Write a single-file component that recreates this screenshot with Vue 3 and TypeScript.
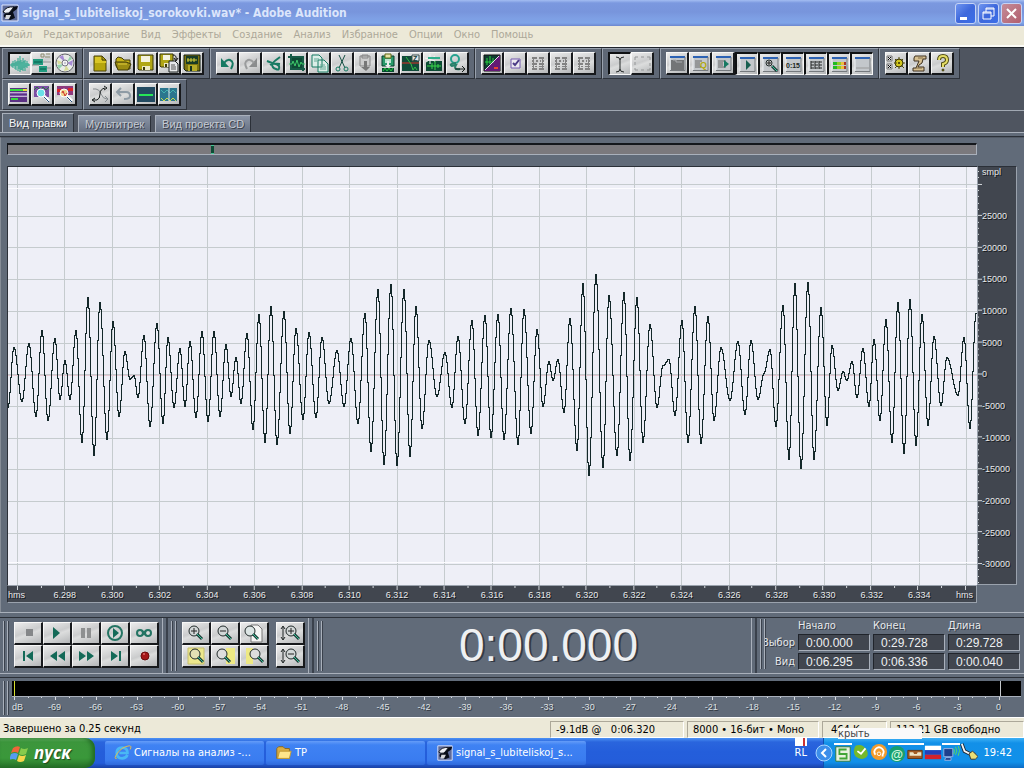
<script setup lang="ts">
import { h, type FunctionalComponent } from 'vue'

interface Shape {
  d?: string
  f?: string
  s?: string
  w?: number
  t?: string
  x?: number
  y?: number
  z?: number
}

const circle = (x: number, y: number, r: number): string =>
  `M${x - r} ${y}a${r} ${r} 0 1 0 ${2 * r} 0a${r} ${r} 0 1 0 ${-2 * r} 0z`

const teal = '#177a63'
const windowBase: Shape[] = [
  { d: 'M3 3h15v14H3z', f: '#c3c7cb' },
  { d: 'M3 17V5M3 4h15', s: '#eef1f4' },
  { d: 'M3 3h15v2H3z', f: '#2c62b4' },
  { d: 'M18 4v13.5H3', s: '#75797d' },
]
const presets: Shape[] = [
  { d: 'M4 4h5v2H4zM11 4h5v2h-5zM4 7h2v2H4zM8 7h2v2H8zM12 7h1v2h-1zM15 7h1v2h-1zM4 10h5v2H4zM11 10h5v2h-5zM4 13h2v1H4zM7 13h2v1H7zM11 13h5v1h-5zM4 15h5v2H4zM11 15h5v2h-5zM5 4h1v12H5zM14 4h1v12h-1z', f: '#828282' },
]
const lens = (x: number, y: number, fill = 'none', r = 4): Shape[] => [
  { d: circle(x, y, r), f: fill, s: '#222b2b', w: 1 },
  { d: `M${x + 3} ${y + 3}l5 5`, s: '#1c3c36', w: 3 },
  { d: `M${x + 3} ${y + 3}l5 5`, s: '#3cc39c', w: 1 },
]
const floppy = (x: number, y: number, n: number): Shape[] => [
  { d: `M${x} ${y}h${n}v${n}H${x + 1}L${x} ${y + n - 1}z`, f: '#b0a616', s: '#3b3808' },
  { d: `M${x + 3} ${y + 1}h${n - 6}v${Math.floor(n / 2) - 1}h${6 - n}z`, f: '#f4f2df' },
  { d: `M${x + 4} ${y + n - 4}h${n - 7}v4h${7 - n}z`, f: '#ece9c5' },
  { d: `M${x + 5} ${y + n - 3}h2v3h-2z`, f: '#3b3808' },
]
const adobe: Shape[] = [
  { d: 'M2 2h16v16H2z', f: '#5d6a98', s: '#dfe6ff' },
  { d: 'M4 14Q3 10 8 10L12 4 18 3 17 6 13 9 15 15 10 17z', f: '#090d18' },
  { d: 'M3 9Q6 3 14 4L9 10Q5 11 3 9z', f: '#eef0f5', s: '#090d18' },
  { d: 'M6 12h5l-2 4H5z', f: '#d7d8dc' },
]

const icons: Record<string, Shape[]> = {
  wave: [{ d: 'M1 10v2M2 9v4M3 7v7M4 9v3M5 6v9M6 8v8M7 7v5M8 4v13M9 7v8M10 2v16M11 6v10M12 8v8M13 4v13M14 7v7M15 6v11M16 9v4M17 7v7M18 9v3M19 10v2', s: '#20a589' }],
  multi: [
    { d: 'M1 6h10v6H1zM7 13h8v6H7z', f: '#229b80' },
    { d: 'M11 9h8M0 12h7M15 15h4', s: '#8b9292' },
    { d: 'M2 9h8M8 16h6', s: '#075b4b' },
    { d: 'M9 1h3v3H9zM14 1h4M13 4h5', s: '#8e8b70' },
  ],
  cd: [
    { d: circle(10, 10, 9), f: '#e9ece8', s: '#63656b' },
    { d: 'M10 9L4 4 8 2zM12 10l6-3-1 6z', f: '#a78bd5' },
    { d: 'M9 11L2 12l2 4zM12 9l3-6 2 3z', f: '#94d3ad' },
    { d: 'M9 10L2 7l1 4zM11 12l3 5-5 1z', f: '#d7dc96' },
    { d: circle(10, 10, 3), f: '#f4f3f5', s: '#777484' },
    { d: circle(10, 10, 1), f: '#b8b8c6' },
  ],
  newfile: [{ d: 'M4 3h8l4 4v11H4z', f: '#b5a50e', s: '#4a4308' }, { d: 'M5 4h7v4h4v2H5z', f: '#dac626' }, { d: 'M12 3v4h4', s: '#4a4308' }],
  open: [{ d: 'M3 6l2-2 4 1 2 2h6v9H5L3 13z', f: '#c6b318', s: '#403b08' }, { d: 'M2 9h11l5 2-3 6H5z', f: '#9b8c12', s: '#403b08' }, { d: 'M5 11h9', s: '#e2ce3a' }],
  save: floppy(2, 2, 15),
  saveas: [...floppy(1, 1, 13), { d: 'M10 8h6l3 3v8h-9z', f: '#e6e8ea', s: '#1d2222' }, { d: 'M12 12h4M12 14h5M12 16h5', s: '#555' }, { d: 'M14 2q4 0 3 5M15 5l2 3 2-3', s: '#111' }],
  saveall: [{ d: 'M2 2h16v16H4l-2-2z', f: '#7e7610', s: '#111c10' }, { d: 'M4 3h12v8H4z', f: '#183b26' }, { d: 'M5 7h10M6 5v4M9 5v4M12 5v4', s: '#d9d137' }, { d: 'M6 12h9v6H6z', f: '#b6ac27' }, { d: 'M8 13h2v5H8z', f: '#173521' }],
  undo: [{ d: 'M4 5v9h8z', f: teal }, { d: 'M7 10Q10 6 13 7q5 2 1 9', s: teal, w: 2 }],
  redo: [{ d: 'M17 5v9H9z', f: '#8b8d8e' }, { d: 'M14 10Q11 6 8 7q-5 2-1 9', s: '#9a9c9d', w: 2 }],
  scrap: [{ d: 'M17 4Q11 8 8 12M4 8l5 2 8 1M7 12q5-3 9 1 1 5-3 3-4-1-4-5', s: teal, w: 2 }],
  crop: [{ d: 'M2 4h15v14M5 1v15h14', s: '#175b47', w: 2 }, { d: 'M6 5h10v10H6z', f: '#0e4b35' }, { d: 'M3 11h3l1-3 2 5 2-6 2 7 2-5 1 2h3', s: '#3dc76a' }],
  copy: [{ d: 'M3 2h7l3 3v9H3zM9 7h6l4 4v8H9z', f: '#dceee8', s: teal }, { d: 'M5 6h5M5 8h3M11 12h5M11 14h6M11 16h6', s: '#62aa96' }],
  cut: [{ d: 'M7 2l6 13M13 2L7 15', s: '#155044', w: 1 }, { d: circle(6, 16, 2), s: teal, w: 1 }, { d: circle(14, 16, 2), s: teal, w: 1 }],
  pasteoff: [{ d: 'M5 3h10v10H5zM7 2h6v3H7z', f: '#ccc', s: '#858585' }, { d: 'M9 8h3v6h3l-4 4-5-4h3z', f: '#777' }],
  paste: [{ d: 'M4 3h12v10H4z', f: '#2a9a6b', s: '#073d2d' }, { d: 'M7 1h6v4H7z', f: '#e5e4a6', s: '#656818' }, { d: 'M7 6h6v4H7z', f: '#bce3d0' }, { d: 'M9 8h2v4h2l-3 3-3-3h2z', f: '#eee' }, { d: 'M4 15h12v4H4z', f: '#064c30' }, { d: 'M5 18l2-3 2 3 2-3 2 3 2-3', s: '#26c03f' }],
  mixpaste: [{ d: 'M1 3h17v15H1z', f: '#104b3a' }, { d: 'M1 10h17', s: '#dd2e27' }, { d: 'M5 4l5 7 2 6 2-3 2 3', s: '#32ba45' }, { d: 'M11 2h7v6h-7z', f: '#e4e9e8', s: '#394c4c' }, { t: 'Z', x: 12, y: 8, z: 7, f: '#163d38' }],
  hush: [{ d: 'M2 8h16v10H2z', f: '#0e4b35' }, { d: 'M3 13h14M8 10v6M11 8v9M14 11v4', s: '#38d74b' }, { d: 'M6 1v10M1 5l10 3M2 9l9-6', s: '#f2f6f4' }, { d: 'M4 5h12', s: '#2fae8c', w: 2 }],
  convert: [{ d: circle(8, 6, 4), s: '#27a290', w: 2 }, { d: 'M9 10q-8 1-4 3l4-1q-3 5 4 4', s: '#27816b', w: 2 }, { d: 'M8 16h9M15 13l3 3-3 3', s: '#161d1a' }],
  spectral: [{ d: 'M2 2h16v16H2z', f: '#0e3b2f', s: '#111' }, { d: 'M18 2v16H2z', f: '#641a75' }, { d: 'M3 9h9M5 5v7M8 3v8M11 5v4', s: '#28d340' }, { d: 'M3 17L17 3', s: '#e8d9e9' }, { d: 'M12 15h4', s: '#e84233', w: 2 }],
  check: [{ d: 'M6 6h9v9H6z', f: '#eceaf0', s: '#755ab0' }, { d: 'M8 10l2 2 4-5', s: '#4a3a86', w: 2 }],
  p1: presets,
  p2: presets,
  p3: presets,
  ibeam: [{ d: 'M6 3q4 0 4 3 0-3 4-3M10 6v9q0 3-4 3M10 15q0 3 4 3', s: '#252929', w: 1 }],
  marquee: [{ d: 'M3 7V4h3M9 4h3M15 4h3v3M18 10v3M18 15v2h-3M12 17H9M6 17H3v-2M3 12V9', s: '#949697' }],
  winfiles: [...windowBase, { d: 'M4 7h13v10H4z', f: '#737577' }, { d: 'M6 7h3v2h6', s: '#aaacaf' }],
  winq: [...windowBase, { d: 'M5 8h7M5 10h5M5 12h5M5 14h6', s: '#666' }, { t: 'Q', x: 10, y: 15, z: 9, f: '#b2a90b' }],
  winp: [...windowBase, { d: 'M5 8h8M5 10h5M5 12h5M5 14h8', s: '#666' }, { d: 'M11 7l5 4-5 4z', f: teal }],
  winplay: [...windowBase, { d: 'M9 6l5 5-5 5z', f: '#165f50' }],
  winzoom: [...windowBase, ...lens(9, 9, '#c9cccc', 3), { d: 'M7 9h4M9 7v4', s: '#222' }],
  wintime: [...windowBase, { t: '0:15', x: 3, y: 14, z: 7, f: '#202622' }],
  wineee: [...windowBase, { d: 'M5 8h3M5 11h3M5 14h3M9 8h3M9 11h3M9 14h3M13 8h3M13 11h3M13 14h3M5 7v8M9 7v8M13 7v8', s: '#242727' }],
  winlevel: [...windowBase, { d: 'M4 8h4v3H4zM4 12h4v3H4z', f: '#21bb22' }, { d: 'M8 8h4v3H8zM8 12h4v3H8z', f: '#8fce25' }, { d: 'M12 8h3v3h-3zM12 12h3v3h-3z', f: '#efbe3d' }, { d: 'M15 8h2v3h-2zM15 12h2v3h-2z', f: '#a93627' }],
  winblank: [...windowBase, { d: 'M4 14h13', s: '#999' }],
  settings: [{ d: 'M1 3h5v5H1zM1 11h5v5H1z', f: '#dedfe0', s: '#777' }, { d: 'M2 4l3 3M5 4L2 7M2 12l3 3M5 12l-3 3', s: '#111' }, { d: circle(13, 10, 4), f: '#d1c61d', s: '#39370c' }, { d: 'M13 4v3M13 13v3M8 10h3M16 10h3M9 6l2 2M15 12l3 3M17 6l-2 2M9 15l2-2', s: '#514b0a', w: 1 }, { d: circle(13, 10, 1), f: '#302c06' }],
  script: [{ d: 'M6 3h11v3h-3q0 5-4 6l-1 2h6v4H4v-3h3l3-7H5V5z', f: '#d7c091', s: '#3e3120' }, { d: 'M9 5h5M7 15h6', s: '#816c46' }],
  help: [{ d: 'M7 7q0-4 4-4t4 4q0 3-4 4v3', s: '#504c12', w: 4 }, { d: 'M7 7q0-4 4-4t4 4q0 3-4 4v3', s: '#e4dc65', w: 2 }, { d: circle(11, 17, 1), f: '#817812', s: '#413d0c' }],
  bars: [{ d: 'M1 4h17v4H1zM1 9h17v3H1zM1 13h17v5H1z', f: '#5b3184' }, { d: 'M1 6h13M2 15h7', s: '#35dc3d', w: 2 }, { d: 'M14 6h4', s: '#e8da3a', w: 2 }, { d: 'M1 9h17M1 12h17', s: '#aa8bd0' }],
  freq: [{ d: 'M2 2h15v11H2z', f: '#7b4fa3' }, { d: 'M2 6l3-3 3 3 3-3 3 3 3-3', s: '#2b7640' }, { d: circle(9, 9, 4), f: '#69dfe7', s: '#fff' }, { d: 'M12 12l5 5', s: '#fff', w: 3 }, { d: 'M12 13l5 5', s: '#26507c', w: 1 }],
  phase: [{ d: 'M2 2h16v9H2z', f: '#8d397d' }, { d: 'M2 5h5v3H2zM13 4h5v3h-5z', f: '#da252a' }, { d: circle(9, 9, 4), f: '#f1d58f', s: '#fff' }, { d: 'M12 12l5 5', s: '#fff', w: 3 }, { d: 'M12 13l5 5', s: '#26507c', w: 1 }, { d: 'M7 9l1-2 2 5 2-3', s: '#ce302d' }],
  env: [{ d: 'M3 5h3q3 0 5 5t6 5M15 12l3 3-3 3', s: '#858b8f' }, { d: 'M3 16h4q3-1 3-6t5-6M5 14l-3 2 3 2M14 2l3 2-3 2', s: '#161b1b' }],
  back: [{ d: 'M8 4L4 8l4 4M5 8h8q4 0 4 4 0 3-6 3', s: '#8e9ba5', w: 2 }],
  line: [{ d: 'M1 3h18v15H1z', f: '#234a61' }, { d: 'M3 11h14', s: '#26e557', w: 2 }],
  waves: [{ d: 'M1 4h17v13H1z', f: '#2c768e' }, { d: 'M2 6l3 3 3-3 3 3 3-3 3 3', s: '#44b2b0' }, { d: 'M2 14l3 3 3-3 3 3 3-3 3 3', s: '#c4da48' }, { d: 'M10 4v13', s: '#e3e9ea' }],
  stop: [{ d: 'M11 6h7v7h-7z', f: '#858789' }],
  play: [{ d: 'M9 4l7 6-7 6z', f: '#146a58' }],
  pause: [{ d: 'M8 5h4v10H8zM14 5h4v10h-4z', f: '#8e9091' }],
  playview: [{ d: circle(13, 10, 7), s: '#247463', w: 2 }, { d: 'M11 5l6 5-6 5z', f: '#146a58' }],
  loop: [{ d: circle(9, 10, 3), s: '#247463', w: 2 }, { d: circle(17, 10, 3), s: '#247463', w: 2 }, { d: 'M11 8l4 4M11 12l4-4', s: '#247463', w: 2 }],
  begin: [{ d: 'M8 5h2v10H8zM18 5v10l-7-5z', f: '#146a58' }],
  rew: [{ d: 'M13 5v10l-7-5zM21 5v10l-7-5z', f: '#146a58' }],
  fwd: [{ d: 'M6 5v10l7-5zM14 5v10l7-5z', f: '#146a58' }],
  end: [{ d: 'M17 5h2v10h-2zM9 5v10l7-5z', f: '#146a58' }],
  record: [{ d: circle(14, 10, 4), f: '#a51719', s: '#6b0b0d' }, { d: circle(13, 8, 1), f: '#e26d6b' }],
  zin: [...lens(11, 8, '#d2d7d7', 5), { d: 'M8 8h6M11 5v6', s: '#222' }],
  zout: [...lens(11, 8, '#d2d7d7', 5), { d: 'M8 8h6', s: '#222' }],
  zpage: [{ d: 'M10 2h7l4 4v13H10z', f: '#f5f5f4', s: '#777' }, ...lens(9, 8, '#dce5e4', 5)],
  zsel: [{ d: 'M5 2h16v16H5z', f: '#ece78c', s: '#c7c06c' }, ...lens(12, 8, '#e3e0b4', 5)],
  zleft: [{ d: 'M14 2h9v16h-9z', f: '#eee984' }, ...lens(10, 8, '#ddd', 5)],
  zright: [{ d: 'M5 2h7v16H5z', f: '#eee984' }, ...lens(14, 8, '#ddd', 5)],
  vin: [{ d: 'M6 4v12M4 6l2-3 2 3M4 14l2 3 2-3', s: '#1e2424' }, ...lens(14, 8, '#d2d7d7', 5), { d: 'M11 8h6M14 5v6', s: '#222' }],
  vout: [{ d: 'M6 4v12M4 6l2-3 2 3M4 14l2 3 2-3', s: '#1e2424' }, ...lens(14, 8, '#d2d7d7', 5), { d: 'M11 8h6', s: '#222' }],
  adobe,
  ie: [{ d: 'M15 12q-2 4-6 4-6 0-6-6 0-6 6-6 6 0 6 6H6', s: '#49b8f5', w: 3 }, { d: 'M3 16Q-1 17 4 10T17 2q3 0 1 4', s: '#f2bf3e', w: 1 }],
  folder: [{ d: 'M2 5l2-2h5l2 2h5v11H2z', f: '#d9ad44', s: '#89661b' }, { d: 'M5 8h13l-2 8H3z', f: '#ffe58b', s: '#c19731' }],
  flag: [{ d: 'M3 5q4-3 7-1L8 10q-3-2-7 0z', f: '#ef6539' }, { d: 'M11 5q3 2 7 0l-2 6q-4 2-7 0z', f: '#87cb4c' }, { d: 'M1 11q4-2 7 0l-2 6q-3-2-7 0z', f: '#559cf1' }, { d: 'M9 12q3 2 7 0l-2 6q-4 2-7 0z', f: '#f6d64b' }],
  tscan: [{ d: 'M2 2h16v16H2z', f: '#e9f1df', s: '#2f792f' }, { d: 'M14 5H6v5h8v5H6', s: '#42a537', w: 2 }],
  tskype: [{ d: 'M4 3q7-3 12 4 4 7-2 10-5 2-10-2-4-6 0-12z', f: '#75b92b' }, { d: 'M6 9l4 3 5-6', s: '#fff', w: 2 }],
  tavast: [{ d: circle(10, 10, 9), f: '#f39b2c' }, { d: 'M6 13a5 5 0 1 1 8 0v2', s: '#fff', w: 2 }, { d: circle(10, 12, 2), s: '#fff' }],
  tmail: [{ d: circle(10, 10, 9), f: '#169f70' }, { t: '@', x: 3, y: 15, z: 14, f: '#d5f9df' }],
  tbox: [{ d: 'M2 6h16v9H2z', f: '#a35d25', s: '#633412' }, { d: 'M4 8h4l1 2h3l1-2h4v4H4z', f: '#eee4c5' }],
  tru: [{ d: 'M1 3h18v5H1z', f: '#fff' }, { d: 'M1 8h18v5H1z', f: '#233fba' }, { d: 'M1 13h18v5H1z', f: '#d2222d' }],
  tnet: [{ d: 'M2 4h10v9H2zM4 14h6v3H3z', f: '#1e3f8c', s: '#9eb7e8' }, { d: 'M13 4q2 3 0 6M15 2q3 5 0 9M18 1q3 5 0 11', s: '#60dc54' }],
  tusb: [{ d: 'M2 1l3 8 6 3 6 1', s: '#1b2431', w: 4 }, { d: 'M2 1l3 8 6 3 6 1', s: '#f4f6f8', w: 2 }, { d: 'M10 12l4-3 6 6-3 3h-5z', f: '#e8de75', s: '#333' }],
}

const Glyph: FunctionalComponent<{ name: string; wide?: boolean }> = (p) =>
  h(
    'svg',
    { viewBox: p.wide ? '0 0 26 20' : '0 0 20 20', width: p.wide ? 26 : 20, height: 20, 'aria-hidden': 'true' },
    icons[p.name].map((s) =>
      s.t
        ? h('text', { x: s.x, y: s.y, fill: s.f, 'font-size': s.z, 'font-weight': 'bold', 'font-family': 'Liberation Sans' }, s.t)
        : h('path', { d: s.d, fill: s.f ?? 'none', stroke: s.s ?? 'none', 'stroke-width': s.w ?? 1 }),
    ),
  )
Glyph.props = { name: String, wide: Boolean }

const menus = ['Файл', 'Редактирование', 'Вид', 'Эффекты', 'Создание', 'Анализ', 'Избранное', 'Опции', 'Окно', 'Помощь']
const toolRows: string[][][] = [
  [
    ['wave', 'multi', 'cd'],
    ['newfile', 'open', 'save', 'saveas', 'saveall'],
    ['undo', 'redo', 'scrap', 'crop', 'copy', 'cut', 'pasteoff', 'paste', 'mixpaste', 'hush', 'convert'],
    ['spectral', 'check', 'p1', 'p2', 'p3'],
    ['ibeam', 'marquee'],
    ['winfiles', 'winq', 'winp', 'winplay', 'winzoom', 'wintime', 'wineee', 'winlevel', 'winblank'],
    ['settings', 'script', 'help'],
  ],
  [
    ['bars', 'freq', 'phase'],
    ['env', 'back', 'line', 'waves'],
  ],
]
const pressed = new Set(['wave', 'ibeam', 'winplay', 'winzoom', 'wintime', 'wineee', 'winlevel', 'winblank'])
const tabs = ['Вид правки', 'Мультитрек', 'Вид проекта CD']
const transport = ['stop', 'play', 'pause', 'playview', 'loop', 'begin', 'rew', 'fwd', 'end', 'record']
const zooms = ['zin', 'zout', 'zpage', 'zsel', 'zleft', 'zright']
const vzooms = ['vin', 'vout']
const ranges = [
  { label: 'Выбор', values: ['0:00.000', '0:29.728', '0:29.728'] },
  { label: 'Вид', values: ['0:06.295', '0:06.336', '0:00.040'] },
]
const heads = ['Начало', 'Конец', 'Длина']
const times = Array.from({ length: 19 }, (_, i) => (6.298 + i * 0.002).toFixed(3))
const levels = Array.from({ length: 12 }, (_, i) => 25000 - i * 5000)
const decibels = Array.from({ length: 24 }, (_, i) => -69 + i * 3)
const tasks = [
  { icon: 'ie', label: 'Сигналы на анализ -...' },
  { icon: 'folder', label: 'ТР' },
  { icon: 'adobe', label: 'signal_s_lubiteliskoj_s...' },
]
const tray = ['tscan', 'tskype', 'tavast', 'tmail', 'tbox', 'tru', 'tnet', 'tusb']

// Turning points of the signal: x along the view, y down from its top edge.
const originX = 8
const originY = 167
const peaks: number[][] = [
  [8, 407], [14, 347], [22, 401], [29, 343], [36, 416], [42, 330], [48, 420], [55, 338], [60, 399], [65, 360], [70, 399], [76, 330],
  [82, 442], [88, 297], [94, 455], [100, 302], [107, 439], [113, 321], [119, 416], [125, 351], [130, 379], [134, 375], [138, 397],
  [144, 335], [150, 426], [157, 323], [163, 423], [168, 337], [174, 407], [180, 348], [185, 406], [190, 341], [196, 417], [202, 331],
  [208, 421], [214, 331], [220, 416], [226, 344], [231, 396], [236, 357], [241, 403], [247, 333], [253, 429], [259, 314], [265, 442],
  [271, 306], [277, 444], [284, 311], [290, 433], [296, 328], [303, 419], [309, 332], [316, 417], [322, 337], [329, 403], [337, 350],
  [344, 406], [351, 338], [358, 423], [365, 313], [371, 451], [378, 289], [384, 464], [391, 284], [397, 465], [404, 289], [410, 456],
  [416, 306], [422, 428], [429, 340], [437, 396], [445, 352], [452, 407], [458, 336], [465, 423], [472, 320], [478, 435], [485, 315],
  [491, 437], [498, 314], [504, 439], [511, 308], [518, 444], [524, 309], [531, 433], [537, 329], [543, 406], [549, 361], [553, 380],
  [558, 359], [564, 412], [570, 318], [577, 450], [583, 283], [589, 475], [596, 274], [603, 467], [609, 295], [617, 455], [624, 292],
  [630, 460], [637, 297], [643, 442], [650, 324], [657, 407], [663, 365], [669, 359], [675, 415], [682, 320], [688, 442], [695, 306],
  [701, 443], [708, 316], [714, 420], [721, 347], [730, 400], [738, 341], [745, 414], [751, 340], [758, 399], [764, 373], [770, 349],
  [776, 426], [783, 305], [789, 459], [795, 283], [801, 468], [808, 282], [814, 459], [821, 307], [827, 425], [832, 345], [838, 390],
  [843, 371], [847, 380], [852, 361], [857, 397], [863, 348], [869, 406], [874, 339], [880, 420], [886, 319], [892, 442], [898, 302],
  [904, 453], [910, 299], [916, 445], [922, 314], [928, 425], [934, 336], [941, 405], [947, 357], [958, 395], [964, 337], [970, 428],
  [976, 313],
]
// The trace is drawn one column at a time, with a vertical run between columns.
const wavePath = peaks
  .map(([px, py], i) => {
    if (i === 0) return `M${px - originX + 0.5} ${py - originY + 0.5}`
    const [ax, ay] = peaks[i - 1]
    let part = ''
    for (let x = ax + 1; x <= px; x++) {
      const k = (x - ax) / (px - ax)
      const y = Math.round(ay + ((py - ay) * (1 - Math.cos(Math.PI * k))) / 2)
      part += `V${y - originY + 0.5}H${x - originX + 0.5}`
    }
    return part
  })
  .join('')
const gridX = Array.from({ length: 21 }, (_, i) => Math.round(9 + i * 47.45) + 0.5)
const gridY = Array.from({ length: 13 }, (_, i) => Math.round(17 + i * 31.7) + 0.5)
const vLines = gridX.map((x) => `M${x} 0V418`).join('')
const hLines = gridY.map((y) => `M0 ${y}H969`).join('')
const timeTicks = Array.from({ length: 41 }, (_, i) => `M${Math.round(9 + i * 23.72) + 0.5} 0v${i % 2 ? 2 : 4}`).join('')
const levelTicks = Array.from({ length: 66 }, (_, i) => `M0 ${Math.round(4 + i * 6.34) + 0.5}h${i % 5 === 2 ? 4 : 1}`).join('')
const dbTicks = Array.from({ length: 73 }, (_, i) => `M${Math.round(2 + (i * 41) / 3) + 0.5} 0v${i % 3 ? 1 : 3}`).join('')
</script>

<template>
  <div class="screen">
    <header class="titlebar">
      <Glyph name="adobe" />
      <h1>signal_s_lubiteliskoj_sorokovki.wav* - Adobe Audition</h1>
      <button class="win" aria-label="Свернуть"><svg width="19" height="19"><path d="M4 13h7v3H4z" fill="#fff" /></svg></button>
      <button class="win" aria-label="Восстановить">
        <svg width="19" height="19"><path d="M7 8V4h8v8h-3M4 8h8v7H4zM4 9h8M7 5h8" fill="none" stroke="#fff" stroke-width="1" /></svg>
      </button>
      <button class="win close" aria-label="Закрыть"><svg width="19" height="19"><path d="M5 5l9 9M14 5l-9 9" stroke="#fff" stroke-width="2" /></svg></button>
    </header>
    <nav class="menu">
      <button v-for="m in menus" :key="m">{{ m }}</button>
    </nav>
    <div class="tools">
      <div v-for="(row, r) in toolRows" :key="r" class="toolrow">
        <div v-for="(group, g) in row" :key="g" class="group">
          <button v-for="n in group" :key="n" class="tool" :class="{ pressed: pressed.has(n) }" :aria-label="n"><Glyph :name="n" /></button>
        </div>
      </div>
    </div>
    <div class="tabs" role="tablist">
      <button v-for="(t, i) in tabs" :key="t" role="tab" :aria-selected="i === 0" :class="{ active: i === 0 }">{{ t }}</button>
    </div>
    <main class="editor">
      <div class="overview"><span class="mark"></span></div>
      <div class="view">
        <svg class="wave" viewBox="0 0 969 418" preserveAspectRatio="none" shape-rendering="crispEdges">
          <rect width="969" height="418" fill="#eeeff7" />
          <path :d="vLines + hLines" stroke="#c5cbce" fill="none" />
          <path d="M0 21.5H969M0 395.5H969" stroke="#fcfcff" />
          <path d="M0 208.5H969" stroke="#e5c8d2" />
          <path :d="wavePath" stroke="#14282a" fill="none" />
        </svg>
        <div class="levels">
          <svg class="vticks" viewBox="0 0 4 418" preserveAspectRatio="none" shape-rendering="crispEdges"><path :d="levelTicks" stroke="#d6dade" /></svg>
          <div class="levelnums">
            <span class="unit">smpl</span>
            <span v-for="l in levels" :key="l">{{ l }}</span>
          </div>
        </div>
        <div class="times">
          <svg class="hticks" viewBox="0 0 969 4" preserveAspectRatio="none" shape-rendering="crispEdges"><path :d="timeTicks" stroke="#d6dade" /></svg>
          <div class="timenums">
            <span class="hms">hms</span>
            <span v-for="t in times" :key="t" class="num">{{ t }}</span>
            <span class="hms right">hms</span>
          </div>
        </div>
      </div>
    </main>
    <section class="dock">
      <div class="pane">
        <i class="grip"></i>
        <div class="pad transport">
          <button v-for="n in transport" :key="n" class="tool big" :aria-label="n"><Glyph :name="n" wide /></button>
        </div>
      </div>
      <div class="pane">
        <i class="grip"></i>
        <div class="pad zoom">
          <button v-for="n in zooms" :key="n" class="tool big" :aria-label="n"><Glyph :name="n" wide /></button>
        </div>
        <div class="pad vzoom">
          <button v-for="n in vzooms" :key="n" class="tool big" :aria-label="n"><Glyph :name="n" wide /></button>
        </div>
      </div>
      <div class="pane clock">
        <i class="grip"></i>
        <output>0:00.000</output>
      </div>
      <div class="pane last">
        <i class="grip"></i>
        <div class="ranges">
          <span></span>
          <span v-for="t in heads" :key="t" class="head">{{ t }}</span>
          <template v-for="r in ranges" :key="r.label">
            <span class="rowlabel"><b>{{ r.label }}</b></span>
            <input v-for="(v, i) in r.values" :key="i" :value="v" :aria-label="r.label + ' ' + heads[i]" />
          </template>
        </div>
      </div>
    </section>
    <section class="meter">
      <i class="grip"></i>
      <div class="meterbody">
        <div class="bar"><i class="low"></i><i class="peak"></i></div>
        <svg class="dbticks" viewBox="0 0 1008 4" preserveAspectRatio="none" shape-rendering="crispEdges"><path :d="dbTicks" stroke="#d6dade" /></svg>
        <div class="dbs"><span class="unit">dB</span><span v-for="d in decibels" :key="d" class="num">{{ d }}</span></div>
      </div>
    </section>
    <footer class="status">
      <span class="msg">Завершено за 0.25 секунд</span>
      <span class="cell a">-9.1dB @ &nbsp; 0:06.320</span>
      <span class="cell b">8000 • 16-бит • Моно</span>
      <span class="cell c">464 K<span class="ghost"><b>крыть</b></span></span>
      <span class="cell d">112.21 GB свободно</span>
    </footer>
    <div class="taskbar">
      <button class="start"><Glyph name="flag" /><span>пуск</span></button>
      <button v-for="t in tasks" :key="t.label" class="task"><Glyph :name="t.icon" /><span>{{ t.label }}</span></button>
      <div class="lang"><i></i><span>RL</span></div>
      <div class="tray">
        <button class="expand" aria-label="Показать значки"><svg width="18" height="18"><circle cx="9" cy="9" r="8" fill="#3c8eea" stroke="#a8d5ff" /><path d="M11 5L7 9l4 4" fill="none" stroke="#fff" stroke-width="2" /></svg></button>
        <span v-for="t in tray" :key="t" class="ti" :class="t"><Glyph :name="t" /></span>
        <time>19:42</time>
      </div>
    </div>
  </div>
</template>

<style>
body {
  margin: 0;
  background: #616b79;
}
</style>

<style scoped>
* {
  box-sizing: border-box;
}
.screen {
  min-height: 100vh;
  display: flex;
  flex-direction: column;
  font: 11px/14px 'DejaVu Sans Condensed', 'Noto Sans', sans-serif;
  background: #616b79;
  overflow: hidden;
}
button {
  font: inherit;
  padding: 0;
  margin: 0;
  border: 0;
  background: none;
}
svg {
  display: block;
  flex: none;
}
.titlebar {
  height: 26px;
  display: flex;
  align-items: center;
  gap: 2px;
  padding: 0 2px 0 0;
  background: linear-gradient(#a3bdf2 0, #7b98df 3px, #7895dc 12px, #7e9fe4 18px, #7ea4e8 23px, #6c86ce 26px);
}
h1 {
  flex: 1;
  margin: 0;
  font: bold 12px/18px 'DejaVu Sans Condensed', 'Noto Sans', sans-serif;
  color: #dbe5fb;
  white-space: nowrap;
}
.win {
  width: 21px;
  height: 21px;
  border: 1px solid #c5d3f6;
  border-radius: 3px;
  background: linear-gradient(135deg, #6f95f0, #3e68dc 50%, #3b6ee8);
}
.close {
  background: linear-gradient(135deg, #c48c99, #b25f6e);
}
.menu {
  height: 21px;
  display: flex;
  align-items: center;
  gap: 11px;
  padding: 0 5px 1px;
  background: #ece9d8;
  border-bottom: 2px solid #fafaf5;
  color: #aca899;
}
.menu button {
  color: inherit;
}
.tools {
  border-top: 1px solid #20242b;
  border-bottom: 1px solid #a1a8b2;
  padding: 0 2px;
  background: #4f5560;
}
.toolrow {
  display: flex;
  height: 31px;
}
.group {
  display: flex;
  height: 31px;
  padding: 3px 5px 4px;
  background: #5f6876;
  border: 1px solid #99a1ad;
  border-color: #99a1ad #2e333b #2e333b #99a1ad;
}
.tool {
  width: 23px;
  height: 23px;
  border: 1px solid #f7f7f7;
  border-right: 2px solid #17191c;
  border-bottom: 2px solid #17191c;
  background: linear-gradient(160deg, #ececec, #cbcccd 45%, #dcdddd 55%, #b4b6b8);
  overflow: hidden;
}
.tool.pressed {
  border: 2px solid #0f1113;
  border-right: 1px solid #f7f7f7;
  border-bottom: 1px solid #f7f7f7;
}
.tabs {
  height: 26px;
  display: flex;
  align-items: flex-end;
  gap: 4px;
  padding: 0 2px 4px;
  background: linear-gradient(#4f5560 21px, #a9b0bb 21px, #a9b0bb 22px, #616b79 22px);
  border-bottom: 1px solid #2b3038;
}
.tabs button {
  height: 17px;
  padding: 0 6px;
  color: #c5cad2;
  background: linear-gradient(#8b95a6, #667082);
  border: 1px solid #a9b0bb;
  border-right-color: #2b3038;
  border-bottom: 0;
  text-shadow: 1px 1px #3a404a;
  font: 11px/17px 'Liberation Sans', sans-serif;
}
.tabs .active {
  height: 19px;
  background: #616b79;
  color: #f4f5f7;
}
.editor {
  flex: 1;
  display: flex;
  flex-direction: column;
  padding: 5px 7px 9px 6px;
  border-left: 1px solid #858c96;
  border-top: 1px solid #515965;
}
.overview {
  height: 12px;
  margin-right: 40px;
  border: 1px solid #a9b0bb;
  border-top: 2px solid #14171c;
  border-left-color: #14171c;
  background: #7b797d;
  display: flex;
}
.mark {
  margin-left: 21%;
  width: 3px;
  height: 9px;
  background: #0e4b35;
  border-top: 1px solid #45c595;
  border-bottom: 1px solid #45c595;
}
.view {
  flex: 1;
  margin-top: 11px;
  display: grid;
  grid-template-columns: 1fr 40px;
  grid-template-rows: 1fr 18px;
}
.wave {
  width: 100%;
  height: 100%;
  min-height: 0;
  border-top: 1px solid #2b3038;
  border-left: 1px solid #2b3038;
  contain: size;
}
.levels {
  display: flex;
  background: #41464f;
  border: 1px solid #9aa2ad;
  border-top-color: #2b3038;
  color: #e8eaec;
}
.vticks {
  width: 4px;
  height: 100%;
  contain: size;
}
.levelnums {
  flex: 1;
  display: flex;
  flex-direction: column;
  padding-bottom: 4px;
}
.levelnums span {
  flex: 1;
  display: flex;
  align-items: center;
  font: 9px/10px 'Liberation Sans', sans-serif;
  text-shadow: 1px 1px #14171c;
}
.levelnums .unit {
  flex: 0 0 33px;
  align-items: flex-start;
}
.times {
  background: #41464f;
  border: 1px solid #9aa2ad;
  border-left-color: #2b3038;
  color: #e8eaec;
  overflow: hidden;
}
.hticks {
  width: 100%;
  height: 4px;
}
.timenums {
  display: flex;
  font: 9px/10px 'Liberation Sans', sans-serif;
  text-shadow: 1px 1px #14171c;
}
.num {
  flex: 1 1 0;
  min-width: 0;
  text-align: center;
}
.hms {
  flex: 0 0 33px;
}
.right {
  text-align: right;
  padding-right: 3px;
}
.dock {
  height: 62px;
  display: flex;
  border-top: 1px solid #a9b0bb;
  border-bottom: 1px solid #a9b0bb;
  padding-top: 4px;
  background: linear-gradient(#616b79 4px, #2b3038 4px, #2b3038 5px, #616b79 5px);
}
.pane {
  display: flex;
  padding: 3px 4px 2px 3px;
  margin-top: 1px;
  border-right: 2px solid #3a414c;
  box-shadow: inset -3px 0 #616b79, inset -4px 0 #a9b0bb;
}
.last {
  padding-top: 1px;
  border-right: 0;
  box-shadow: none;
}
.grip {
  width: 5px;
  height: 50px;
  flex: none;
  border: 1px solid #a9b0bb;
  border-top: 0;
  border-bottom: 0;
  box-shadow: 1px 0 #3a414c, inset 1px 0 #3a414c;
}
.pad {
  display: grid;
  grid-auto-rows: 23px;
  grid-template-columns: repeat(5, 29px);
  margin: 1px 3px 0 6px;
  align-self: flex-start;
}
.zoom {
  grid-template-columns: repeat(3, 29px);
  margin-right: 0;
}
.vzoom {
  grid-template-columns: 29px;
  margin-left: 7px;
}
.big {
  width: 29px;
}
.clock {
  flex: 1;
}
output {
  flex: 1;
  padding-left: 24px;
  text-align: center;
  font: 46px/48px 'Liberation Sans', sans-serif;
  color: #eef0f2;
  text-shadow: 2px 1px #343a44;
}
.ranges {
  display: grid;
  grid-template-columns: 30px repeat(3, 72px);
  grid-template-rows: 13px 17px 17px;
  gap: 2px 3px;
  color: #e6e8eb;
  text-shadow: 1px 1px #343a44;
}
.rowlabel {
  display: flex;
  justify-content: flex-end;
  align-items: center;
  overflow: hidden;
}
.rowlabel b {
  font-weight: normal;
}
.ranges input {
  width: 72px;
  height: 17px;
  padding: 0 7px;
  background: #41464f;
  border: 1px solid #20242b;
  border-right-color: #a9b0bb;
  border-bottom-color: #a9b0bb;
  color: #eef0f2;
  font: 12px/15px 'Liberation Sans', sans-serif;
}
.meter {
  height: 40px;
  display: flex;
  padding: 3px 3px 0;
  border-top: 1px solid #2b3038;
  margin-top: 3px;
}
.meter .grip {
  height: 34px;
}
.meterbody {
  flex: 1;
  margin-left: 4px;
}
.bar {
  height: 16px;
  display: flex;
  justify-content: space-between;
  background: #000;
  border-bottom: 1px solid #a9b0bb;
  padding: 0 20px 0 2px;
}
.low {
  width: 1px;
  background: #d7df30;
}
.peak {
  width: 1px;
  background: #c4c8cc;
}
.dbticks {
  width: 100%;
  height: 4px;
}
.dbs {
  display: flex;
  padding-right: 2px;
  font: 9px/12px 'Liberation Sans', sans-serif;
  color: #dfe2e5;
  text-shadow: 1px 1px #343a44;
}
.dbs .unit {
  flex: 0 0 22px;
}
.status {
  height: 21px;
  flex: none;
  display: flex;
  align-items: center;
  gap: 3px;
  padding: 2px 0 0 3px;
  background: #ece9d8;
  border-top: 1px solid #fff;
}
.msg {
  flex: 1;
}
.cell {
  height: 17px;
  padding-left: 5px;
  border: 1px solid #aca899;
  border-right-color: #fff;
  border-bottom-color: #fff;
  position: relative;
  line-height: 16px;
  white-space: pre;
}
.a {
  width: 134px;
}
.b {
  width: 132px;
}
.c {
  width: 65px;
  padding-left: 8px;
}
.d {
  width: 134px;
}
.ghost {
  position: absolute;
  z-index: 1;
  left: 15px;
  top: 6px;
  width: 84px;
  height: 11px;
  overflow: hidden;
  background: #fafafa;
  line-height: 12px;
}
.ghost b {
  font-weight: normal;
  color: #444;
}
.taskbar {
  height: 30px;
  flex: none;
  display: flex;
  align-items: center;
  gap: 2px;
  background: linear-gradient(#4c92f5 0, #2a65dd 4px, #245edb 14px, #245dda 25px, #1941a5 30px);
  color: #fff;
}
.start {
  width: 95px;
  height: 30px;
  margin-right: 8px;
  padding-left: 10px;
  display: flex;
  align-items: center;
  gap: 4px;
  border-radius: 0 10px 10px 0;
  background: linear-gradient(#66b566 0, #3c963c 4px, #3a983a 20px, #256f27 30px);
  box-shadow: inset -3px 0 4px #226a25;
  color: #fff;
}
.start span {
  font: italic bold 17px/22px 'Open Sans', sans-serif;
  text-shadow: 1px 1px 1px #1d4a1f;
}
.task {
  flex: 0 1 159px;
  height: 24px;
  padding-left: 9px;
  display: flex;
  align-items: center;
  gap: 2px;
  border-radius: 2px;
  background: linear-gradient(#659cf8 0, #3f82f3 4px, #3a7cf0 19px, #2f69da 24px);
  color: #fff;
  white-space: nowrap;
}
.task svg {
  width: 18px;
  height: 18px;
}
.lang {
  margin-left: auto;
  margin-right: 14px;
  align-self: stretch;
  display: flex;
  flex-direction: column;
  align-items: center;
}
.lang i {
  width: 12px;
  height: 8px;
  background: linear-gradient(90deg, #fff 8px, #c33 8px, #c33 10px, #fff 10px);
}
.tray {
  width: 201px;
  height: 30px;
  display: flex;
  align-items: center;
  background: linear-gradient(#3db1f5 0, #1290e8 5px, #1190e9 24px, #0d6cc4 30px);
  border-left: 1px solid #0f4fae;
}
.expand {
  margin-left: -9px;
  margin-right: 1px;
}
.ti {
  width: 18px;
  height: 20px;
}
.ti svg {
  width: 18px;
  height: 18px;
}
.tscan,
.tmail,
.tbox,
.tnet {
  border-top: 2px solid #fff;
}
time {
  margin-left: auto;
  margin-right: 12px;
}
</style>
